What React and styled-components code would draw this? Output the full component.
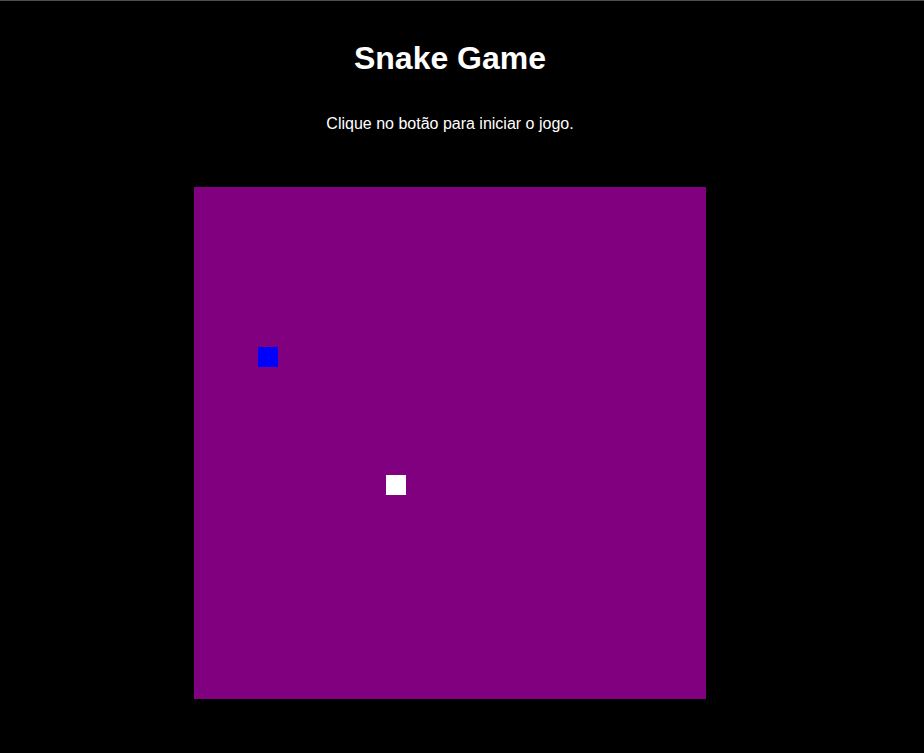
import React from "react";
import styled, { createGlobalStyle } from "styled-components";

const GlobalStyle = createGlobalStyle`
  html, body {
    margin: 0;
    padding: 0;
    background-color: #000;
  }

  body {
    font-family: "Liberation Sans", Arial, sans-serif;
    color: #fff;
    min-height: 753px;
    border-top: 1px solid #4d4d4d;
    box-sizing: border-box;
  }
`;

const Page = styled.div`
  width: 900px;
  display: flex;
  flex-direction: column;
  align-items: center;
`;

const Title = styled.h1`
  font-size: 32px;
  font-weight: bold;
  line-height: 37px;
  margin: 39px 0 0;
`;

const Message = styled.p`
  font-size: 16px;
  line-height: 18px;
  margin: 38px 0 0;
`;

const Board = styled.div`
  position: relative;
  width: 512px;
  height: 512px;
  margin-top: 54px;
  background-color: #800080;
`;

const Cell = styled.div`
  position: absolute;
  width: 20px;
  height: 20px;
  background-color: ${(props) => (props.$food ? "#0000ff" : "#ffffff")};
`;

const snake = [{ x: 192, y: 288 }];
const food = { x: 64, y: 160 };

const App = () => (
  <>
    <GlobalStyle />
    <Page>
      <Title>Snake Game</Title>
      <Message>Clique no botão para iniciar o jogo.</Message>
      <Board>
        <Cell $food style={{ left: food.x, top: food.y }} />
        {snake.map((part, i) => (
          <Cell key={i} style={{ left: part.x, top: part.y }} />
        ))}
      </Board>
    </Page>
  </>
);

export default App;
